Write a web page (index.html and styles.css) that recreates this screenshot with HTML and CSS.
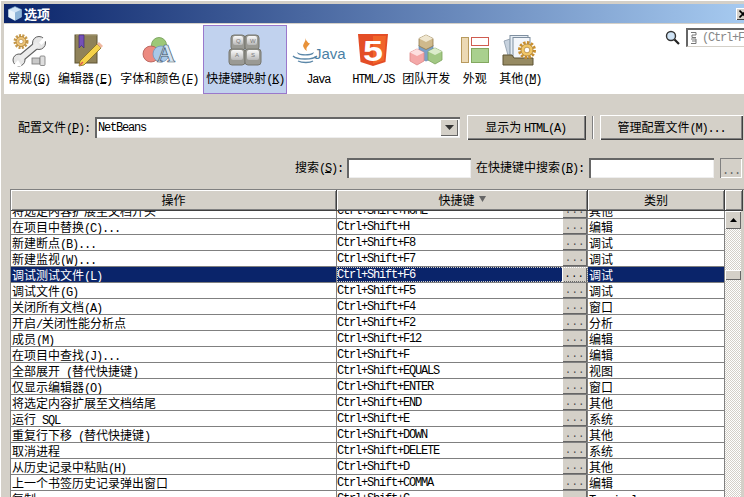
FILE: index.html
```html
<!DOCTYPE html>
<html lang="zh-CN">
<head>
<meta charset="utf-8">
<title>选项</title>
<link rel="stylesheet" href="styles.css">
</head>
<body>
<div class="window">
  <div class="title">
    <svg class="title-icon" width="14" height="15" viewBox="0 0 14 15"><path d="M7 0.5 13.5 3.5V11L7 14.5.5 11V3.5Z" fill="#cfe3f5" stroke="#5f8fb8" stroke-width=".6"/><path d="M.5 3.5 7 6.5V14.5L.5 11Z" fill="#e9f3fb"/><path d="M13.5 3.5 7 6.5V14.5L13.5 11Z" fill="#8db4d8"/></svg>
    <span class="title-text">选项</span>
    <span class="close"><svg width="8" height="8" viewBox="0 0 8 8"><path d="M.5.5 7.5 7.5M7.5.5.5 7.5" stroke="#000" stroke-width="1.6"/></svg></span>
  </div>

  <div class="toolbar">
    <div class="tab">
      <svg class="ic" width="34" height="32" viewBox="0 0 34 32">
        <circle cx="9" cy="7.500" r="6" fill="none" stroke="#c79a4c" stroke-width="3" stroke-dasharray="2 1.200"/>
        <circle cx="9" cy="7.500" r="5" fill="#eec478" stroke="#a87c30" stroke-width=".8"/>
        <circle cx="9" cy="7.500" r="2.200" fill="#fff" stroke="#a87c30" stroke-width=".6"/>
        <path d="M8 25 26 10" stroke="#5f5f5f" stroke-width="7.500" stroke-linecap="round"/>
        <circle cx="27" cy="9" r="6.500" fill="#e6e6e6" stroke="#5f5f5f"/>
        <path d="M27 8.500 34 1V6.500L29.500 11Z" fill="#fff"/>
        <circle cx="7" cy="26" r="6" fill="#e6e6e6" stroke="#5f5f5f"/>
        <path d="M6 26 1 32H9.500Z" fill="#fff"/>
        <path d="M8 25 26 10" stroke="#ececec" stroke-width="5.500"/>
        <rect x="20" y="24" width="8" height="6" fill="#c9c9c9" stroke="#777" stroke-width=".8"/>
        <rect x="28" y="22" width="5" height="9.500" rx="1" fill="#dedede" stroke="#777" stroke-width=".8"/>
      </svg>
      <span class="label">常规<span class="l">(<u>G</u>)</span></span>
    </div>
    <div class="tab">
      <svg class="ic" width="34" height="32" viewBox="0 0 34 32">
        <rect x="7" y="1" width="22" height="28" fill="#8f8259" stroke="#5c5233"/>
        <path d="M8 1H29" stroke="#b8ab82"/>
        <path d="M11 1H16V14L13.500 11.500 11 14Z" fill="#7550b8" stroke="#3f2a78" stroke-width=".7"/>
        <path d="M12 27 29 10 33 14 16 31 11 32Z" fill="#f5d24a" stroke="#806a20" stroke-width=".8"/>
        <path d="M13 29 14 30" stroke="#d55" stroke-width="4"/>
        <path d="M29 10 31 8 35 12 33 14Z" fill="#f0b8a0"/>
      </svg>
      <span class="label">编辑器<span class="l">(<u>E</u>)</span></span>
    </div>
    <div class="tab">
      <svg class="ic" width="38" height="32" viewBox="0 0 38 32">
        <circle cx="19" cy="11" r="7.500" fill="#9cc878" stroke="#6f9a50" stroke-width=".8"/>
        <circle cx="11" cy="20" r="8" fill="#ec8a80" stroke="#b05850" stroke-width=".8"/>
        <circle cx="21" cy="20" r="8" fill="#a8c8e8" stroke="#7098c0" stroke-width=".8"/>
        <text x="17" y="28" class="ic-a">A</text>
      </svg>
      <span class="label">字体和颜色<span class="l">(<u>F</u>)</span></span>
    </div>
    <div class="tab selected">
      <svg class="ic" width="34" height="32" viewBox="0 0 34 32">
        <defs><linearGradient id="k" x1="0" y1="0" x2="0" y2="1"><stop offset="0" stop-color="#fafafa"/><stop offset="1" stop-color="#b8b8b8"/></linearGradient></defs>
        <g stroke="#77776f" fill="#9a9a94"><rect x="3" y="1" width="14" height="15" rx="3"/><rect x="17" y="1" width="14" height="15" rx="3"/><rect x="1" y="15" width="16" height="16" rx="3"/><rect x="17" y="15" width="16" height="16" rx="3"/></g>
        <g fill="url(#k)"><rect x="5" y="2" width="10" height="9" rx="2"/><rect x="19" y="2" width="10" height="9" rx="2"/><rect x="3" y="16" width="12" height="10" rx="2"/><rect x="19" y="16" width="12" height="10" rx="2"/></g>
        <g class="ic-key"><text x="8" y="9">Q</text><text x="22" y="9">W</text><text x="7" y="23">A</text><text x="23" y="23">S</text></g>
      </svg>
      <span class="label">快捷键映射<span class="l">(<u>K</u>)</span></span>
    </div>
    <div class="tab">
      <svg class="ic" width="52" height="32" viewBox="0 0 52 32">
        <path d="M13 4C15 8 9 10 12 14 13 16 14 16 15 17 13 13 17 12 18 9 17 10 15 8 13 4Z" fill="#e8923a"/>
        <path d="M5 18C8 21 18 21 22 18L21 20C18 22 9 22 6 20Z" fill="#5b87a8"/>
        <path d="M1 22C5 26 21 26 25 22" fill="none" stroke="#5b87a8" stroke-width="1.300"/>
        <path d="M6 27C10 29 18 29 21 27" fill="none" stroke="#5b87a8" stroke-width="1.300"/>
        <text x="22" y="25" class="ic-java">Java</text>
      </svg>
      <span class="label"><span class="l">Java</span></span>
    </div>
    <div class="tab">
      <svg class="ic" width="30" height="32" viewBox="0 0 30 32">
        <path d="M0 0H30L27.500 28 15 32 2.500 28Z" fill="#e44d26"/>
        <path d="M15 2H28L26 26.500 15 30Z" fill="#f16529"/>
        <text x="5" y="27" class="ic-five" textLength="20" lengthAdjust="spacingAndGlyphs">5</text>
      </svg>
      <span class="label"><span class="l">HTML/JS</span></span>
    </div>
    <div class="tab">
      <svg class="ic" width="34" height="32" viewBox="0 0 34 32">
        <path d="M10 11 17 8 24 11V24L17 27 10 24Z" fill="#7aa0c8" stroke="#5f84aa" stroke-width=".7"/>
        <path d="M17 1 24 4.500V12L17 15.500 10 12V4.500Z" fill="#cfb98c" stroke="#92794a" stroke-width=".8"/>
        <path d="M10 4.500 17 8 24 4.500 17 1Z" fill="#efe6cf"/>
        <path d="M8 15 15 18.500V27L8 31 1 27V18.500Z" fill="#f4a8a8" stroke="#d88" stroke-width=".8"/>
        <path d="M1 18.500 8 22 15 18.500 8 15Z" fill="#fde0e0"/>
        <path d="M26 14 33 17.500V26L26 30 19 26V17.500Z" fill="#a2c884" stroke="#7ba35c" stroke-width=".8"/>
        <path d="M19 17.500 26 21 33 17.500 26 14Z" fill="#dceccb"/>
      </svg>
      <span class="label">团队开发</span>
    </div>
    <div class="tab narrow">
      <svg class="ic" width="30" height="32" viewBox="0 0 30 32">
        <rect x="1.500" y="3.500" width="7" height="25" fill="#ecd9b4" stroke="#b89a5e"/>
        <rect x="11.500" y="3.500" width="17" height="8" fill="#fff" stroke="#cf5c50"/>
        <rect x="11.500" y="14.500" width="17" height="14" fill="#a9d08e" stroke="#83a85f"/>
      </svg>
      <span class="label">外观</span>
    </div>
    <div class="tab">
      <svg class="ic" width="36" height="32" viewBox="0 0 36 32">
        <path d="M2 7 11 4 16 22 7 25Z" fill="#c7d2de" stroke="#7f8fa0" stroke-width=".7"/>
        <rect x="8" y="1.500" width="18" height="23" fill="#e6edf4" stroke="#7f8fa0"/>
        <rect x="11" y="3.500" width="17" height="23" fill="#f3f6fa" stroke="#7f8fa0"/>
        <path d="M1 21H10L12 24H31V31H1Z" fill="#968a62" stroke="#5c5233"/>
        <circle cx="25" cy="16" r="7.500" fill="none" stroke="#c98f2e" stroke-width="3" stroke-dasharray="2.500 1.400"/>
        <circle cx="25" cy="16" r="6" fill="#f2c766" stroke="#a87c30" stroke-width=".8"/>
        <circle cx="25" cy="16" r="2.800" fill="#fff" stroke="#a87c30" stroke-width=".7"/>
      </svg>
      <span class="label">其他<span class="l">(<u>M</u>)</span></span>
    </div>
    <div class="finder">
      <svg width="15" height="15" viewBox="0 0 15 15"><circle cx="6" cy="6" r="4.500" fill="#cfe3f5" stroke="#333" stroke-width="1.400"/><path d="M9.500 9.500 14 14" stroke="#222" stroke-width="2.200"/></svg>
      <div class="finder-box">
        <svg width="6" height="12" viewBox="0 0 6 12"><path d="M0 .5H5V3H1V5.500H5M0 7H5V9H1M5 9V11.500H0" fill="none" stroke="#777"/></svg>
        <span class="finder-hint">(Ctrl+F)</span>
      </div>
    </div>
  </div>

  <div class="content">
    <div class="form-row">
      <span class="cap">配置文件<span class="l">(<u>P</u>):</span></span>
      <div class="combo">
        <span class="l combo-text">NetBeans</span>
        <span class="combo-btn"><svg width="9" height="5" viewBox="0 0 9 5"><path d="M0 0H9L4.500 5Z" fill="#333"/></svg></span>
      </div>
      <button class="btn btn-html">显示为 <span class="l">HTML(<u>A</u>)</span></button>
      <span class="sep"></span>
      <button class="btn btn-manage">管理配置文件<span class="l">(<u>M</u>)...</span></button>
    </div>

    <div class="search-row">
      <span class="cap">搜索<span class="l">(<u>S</u>):</span></span>
      <div class="field field-a"></div>
      <span class="cap">在快捷键中搜索<span class="l">(<u>R</u>):</span></span>
      <div class="field field-b"></div>
      <span class="more"><span class="l">...</span></span>
    </div>

    <div class="table">
      <div class="thead">
        <div class="th c1">操作</div>
        <div class="th c2">快捷键 <svg class="sort" width="7" height="6" viewBox="0 0 7 6"><path d="M0 0H7L3.500 6Z" fill="#666"/></svg></div>
        <div class="th c3">类别</div>
        <div class="th corner"></div>
      </div>
      <div class="tbody">
        <div class="rows">
          <div class="row first"><div class="c1 name">将选定内容扩展至文档开头</div><div class="c2 key"><span class="l">Ctrl+Shift+HOME</span><span class="dots">...</span></div><div class="c3 cat">其他</div></div>
          <div class="row"><div class="c1 name">在项目中替换<span class="l">(C)...</span></div><div class="c2 key"><span class="l">Ctrl+Shift+H</span><span class="dots">...</span></div><div class="c3 cat">编辑</div></div>
          <div class="row"><div class="c1 name">新建断点<span class="l">(B)...</span></div><div class="c2 key"><span class="l">Ctrl+Shift+F8</span><span class="dots">...</span></div><div class="c3 cat">调试</div></div>
          <div class="row"><div class="c1 name">新建监视<span class="l">(W)...</span></div><div class="c2 key"><span class="l">Ctrl+Shift+F7</span><span class="dots">...</span></div><div class="c3 cat">调试</div></div>
          <div class="row sel"><div class="c1 name">调试测试文件<span class="l">(L)</span></div><div class="c2 key"><span class="l">Ctrl+Shift+F6</span><span class="dots">...</span></div><div class="c3 cat">调试</div></div>
          <div class="row"><div class="c1 name">调试文件<span class="l">(G)</span></div><div class="c2 key"><span class="l">Ctrl+Shift+F5</span><span class="dots">...</span></div><div class="c3 cat">调试</div></div>
          <div class="row"><div class="c1 name">关闭所有文档<span class="l">(A)</span></div><div class="c2 key"><span class="l">Ctrl+Shift+F4</span><span class="dots">...</span></div><div class="c3 cat">窗口</div></div>
          <div class="row"><div class="c1 name">开启<span class="l">/</span>关闭性能分析点</div><div class="c2 key"><span class="l">Ctrl+Shift+F2</span><span class="dots">...</span></div><div class="c3 cat">分析</div></div>
          <div class="row"><div class="c1 name">成员<span class="l">(M)</span></div><div class="c2 key"><span class="l">Ctrl+Shift+F12</span><span class="dots">...</span></div><div class="c3 cat">编辑</div></div>
          <div class="row"><div class="c1 name">在项目中查找<span class="l">(J)...</span></div><div class="c2 key"><span class="l">Ctrl+Shift+F</span><span class="dots">...</span></div><div class="c3 cat">编辑</div></div>
          <div class="row"><div class="c1 name">全部展开<span class="l"> (</span>替代快捷键<span class="l">)</span></div><div class="c2 key"><span class="l">Ctrl+Shift+EQUALS</span><span class="dots">...</span></div><div class="c3 cat">视图</div></div>
          <div class="row"><div class="c1 name">仅显示编辑器<span class="l">(O)</span></div><div class="c2 key"><span class="l">Ctrl+Shift+ENTER</span><span class="dots">...</span></div><div class="c3 cat">窗口</div></div>
          <div class="row"><div class="c1 name">将选定内容扩展至文档结尾</div><div class="c2 key"><span class="l">Ctrl+Shift+END</span><span class="dots">...</span></div><div class="c3 cat">其他</div></div>
          <div class="row"><div class="c1 name">运行<span class="l"> SQL</span></div><div class="c2 key"><span class="l">Ctrl+Shift+E</span><span class="dots">...</span></div><div class="c3 cat">系统</div></div>
          <div class="row"><div class="c1 name">重复行下移<span class="l"> (</span>替代快捷键<span class="l">)</span></div><div class="c2 key"><span class="l">Ctrl+Shift+DOWN</span><span class="dots">...</span></div><div class="c3 cat">其他</div></div>
          <div class="row"><div class="c1 name">取消进程</div><div class="c2 key"><span class="l">Ctrl+Shift+DELETE</span><span class="dots">...</span></div><div class="c3 cat">系统</div></div>
          <div class="row"><div class="c1 name">从历史记录中粘贴<span class="l">(H)</span></div><div class="c2 key"><span class="l">Ctrl+Shift+D</span><span class="dots">...</span></div><div class="c3 cat">其他</div></div>
          <div class="row"><div class="c1 name">上一个书签历史记录弹出窗口</div><div class="c2 key"><span class="l">Ctrl+Shift+COMMA</span><span class="dots">...</span></div><div class="c3 cat">编辑</div></div>
          <div class="row"><div class="c1 name">复制</div><div class="c2 key"><span class="l">Ctrl+Shift+C</span><span class="dots">...</span></div><div class="c3 cat"><span class="l">Terminal</span></div></div>
        </div>
        <div class="scrollbar">
          <div class="sb-up"><svg width="7" height="4" viewBox="0 0 7 4"><path d="M3.500 0 7 4H0Z" fill="#000"/></svg></div>
          <div class="sb-track"><div class="sb-thumb"></div></div>
        </div>
      </div>
    </div>
  </div>
</div>
</body>
</html>
```
FILE: styles.css
```css
* { box-sizing: border-box; }
html, body { margin: 0; padding: 0; }
body {
  width: 744px;
  height: 497px;
  overflow: hidden;
  font-family: "Noto Sans CJK SC", "Liberation Sans", sans-serif;
  font-size: 12px;
  line-height: 14px;
  color: #000;
}
u {
  text-decoration-thickness: 1px;
  text-underline-offset: 0;
}
.l {
  font-family: "Liberation Mono", monospace;
  font-size: 12px;
  font-weight: 400;
  letter-spacing: -1.2px;
  white-space: pre;
}

.window {
  width: 744px;
  height: 497px;
  overflow: hidden;
  padding: 4px 0 0 4px;
  background: #d4d0c8;
  box-shadow: inset 1px 1px 0 #fff;
}

/* title bar */
.title {
  height: 19px;
  display: flex;
  align-items: center;
  padding-left: 4px;
  background: linear-gradient(90deg, #0a246a, #a6caf0);
  overflow: hidden;
}
.title-icon { flex: none; }
.title-text {
  margin-left: 2px;
  color: #fff;
  font-size: 13px;
  font-weight: 700;
}
.close {
  margin-left: auto;
  margin-right: -6px;
  width: 14px;
  height: 12px;
  flex: none;
  display: flex;
  align-items: center;
  justify-content: center;
  background: #d4d0c8;
  box-shadow: inset 1px 1px 0 #fff, inset -1px -1px 0 #404040;
}

/* category toolbar */
.toolbar {
  margin-top: 1px;
  height: 70px;
  padding: 1px 0 0 1px;
  display: flex;
  gap: 2px;
  background: #fff;
  overflow: hidden;
}
.tab {
  flex: none;
  height: 69px;
  padding: 8px 2px 0;
  border: 1px solid transparent;
  display: flex;
  flex-direction: column;
  align-items: center;
}
.tab.narrow { width: 39px; }
.tab.selected {
  background: #c1d2ee;
  border-color: #9a78cc;
}
.ic { flex: none; display: block; overflow: visible; }
.label {
  margin-top: 5px;
  height: 14px;
  white-space: nowrap;
}
.ic-a {
  font-family: "Liberation Serif", serif;
  font-size: 25px;
  font-weight: 700;
  fill: #d6e6f5;
  stroke: #44586c;
  stroke-width: .7px;
}
.ic-key {
  font-family: "Liberation Sans", sans-serif;
  font-size: 6px;
  fill: #777;
}
.ic-java {
  font-family: "Liberation Sans", sans-serif;
  font-size: 15px;
  fill: #4a7fa5;
}
.ic-five {
  font-family: "Liberation Sans", sans-serif;
  font-size: 30px;
  font-weight: 700;
  fill: #fff;
}

.finder {
  margin-left: auto;
  display: flex;
  gap: 6px;
  padding-top: 4px;
  flex: none;
  width: 79px;
}
.finder > svg { flex: none; margin-top: 1px; }
.finder-box {
  flex: none;
  width: 72px;
  height: 19px;
  margin-top: -1px;
  display: flex;
  align-items: center;
  gap: 5px;
  padding-left: 3px;
  border-top: 2px solid #666;
  border-left: 2px solid #666;
  border-bottom: 1px solid #d4d0c8;
  background: #fff;
}
.finder-hint {
  color: #888;
  font-family: "Liberation Mono", monospace;
  font-size: 12px;
  letter-spacing: -1.2px;
  white-space: pre;
}

/* form */
.content { padding: 21px 0 0 6px; }
.form-row {
  height: 25px;
  display: flex;
  align-items: center;
  padding-left: 8px;
}
.cap { flex: none; white-space: nowrap; }
.combo {
  flex: none;
  width: 365px;
  height: 21px;
  margin-left: 5px;
  display: flex;
  align-items: center;
  padding-left: 2px;
  background: #fff;
  box-shadow: inset 2px 2px 0 #666, inset -1px -1px 0 #eee;
}
.combo-text { margin-left: 1px; }
.combo-btn {
  margin-left: auto;
  margin-right: 2px;
  width: 18px;
  height: 17px;
  display: flex;
  align-items: center;
  justify-content: center;
  background: #d4d0c8;
  box-shadow: inset 1px 1px 0 #fff, inset -1px -1px 0 #666;
}
.btn {
  flex: none;
  height: 25px;
  padding: 0;
  border: 0;
  font: inherit;
  background: #d4d0c8;
  color: #000;
  box-shadow: inset 1px 1px 0 #fff, inset -1px -1px 0 #404040, inset -2px -2px 0 #808080;
}
.btn-html { width: 119px; margin-left: 7px; padding-right: 2px; }
.btn-manage { width: 143px; margin-left: 6px; }
.sep {
  flex: none;
  width: 2px;
  height: 23px;
  margin-left: 6px;
  background: linear-gradient(90deg, #808080 50%, #fff 50%);
}

.search-row {
  height: 20px;
  margin-top: 18px;
  padding-right: 2px;
  display: flex;
  align-items: center;
  justify-content: flex-end;
}
.field {
  flex: none;
  height: 20px;
  background: #fff;
  box-shadow: inset 2px 2px 0 #666, inset -1px -1px 0 #eee;
}
.field-a { width: 124px; margin: 0 5px 0 4px; }
.field-b { width: 125px; margin: 0 6px 0 5px; }
.more {
  flex: none;
  width: 22px;
  height: 20px;
  display: flex;
  align-items: flex-end;
  justify-content: center;
  color: #666;
  box-shadow: inset 1px 1px 0 #808080, inset -1px -1px 0 #fff;
}

/* table */
.table {
  margin-top: 11px;
  height: 308px;
  border-top: 1px solid #808080;
  border-left: 1px solid #808080;
  display: flex;
  flex-direction: column;
}
.thead { flex: none; height: 21px; display: flex; }
.th {
  height: 21px;
  display: flex;
  align-items: center;
  justify-content: center;
  gap: 4px;
  background: #d4d0c8;
  border-right: 1px solid #404040;
  border-bottom: 1px solid #404040;
  box-shadow: inset 1px 1px 0 #fff, inset -1px -1px 0 #808080;
}
.sort { flex: none; margin-top: -2px; }
.c1 { flex: none; width: 326px; }
.c2 { flex: none; width: 251px; }
.c3 { flex: none; width: 137px; }
.th.corner { flex: none; width: 18px; }

.tbody { flex: 1; min-height: 0; display: flex; overflow: hidden; }
.rows { flex: none; width: 714px; overflow: hidden; background: #fff; }
.row {
  height: 16px;
  display: flex;
  border-bottom: 1px solid #808080;
}
.row.first { margin-top: -8px; }
.name, .key, .cat {
  height: 15px;
  line-height: 15px;
  border-right: 1px solid #808080;
  white-space: nowrap;
  overflow: hidden;
}
.name { padding-left: 1px; }
.key { display: flex; justify-content: space-between; }
.key .l { line-height: 13px; margin-top: 2px; }
.cat { padding-left: 1px; }
.dots {
  flex: none;
  width: 24px;
  height: 15px;
  line-height: 15px;
  text-align: center;
  font-family: "Liberation Mono", monospace;
  font-size: 10px;
  letter-spacing: .6px;
  color: #444;
  background: #d4d0c8;
  box-shadow: inset -1px -1px 0 #666;
}
.row.sel { background: #0a246a; color: #fff; }
.row.sel .key { outline: 1px dotted #d4d0c8; outline-offset: -1px; }
.row.sel .dots {
  width: 25px;
  color: #000;
  box-shadow: inset 1px 1px 0 #fff, inset -1px -1px 0 #666;
}

.scrollbar {
  flex: none;
  width: 18px;
  padding-right: 2px;
  display: flex;
  flex-direction: column;
  background: #d4d0c8;
}
.sb-up {
  flex: none;
  height: 18px;
  display: flex;
  align-items: center;
  justify-content: center;
  background: #d4d0c8;
  box-shadow: inset 1px 1px 0 #fff, inset -1px -1px 0 #666;
}
.sb-track {
  flex: 1;
  padding-top: 41px;
  background: repeating-conic-gradient(#fff 0 25%, #d4d0c8 0 50%) 0 0 / 2px 2px;
}
.sb-thumb {
  height: 10px;
  background: #d4d0c8;
  box-shadow: inset 1px 1px 0 #fff, inset -1px -1px 0 #666;
}
```
